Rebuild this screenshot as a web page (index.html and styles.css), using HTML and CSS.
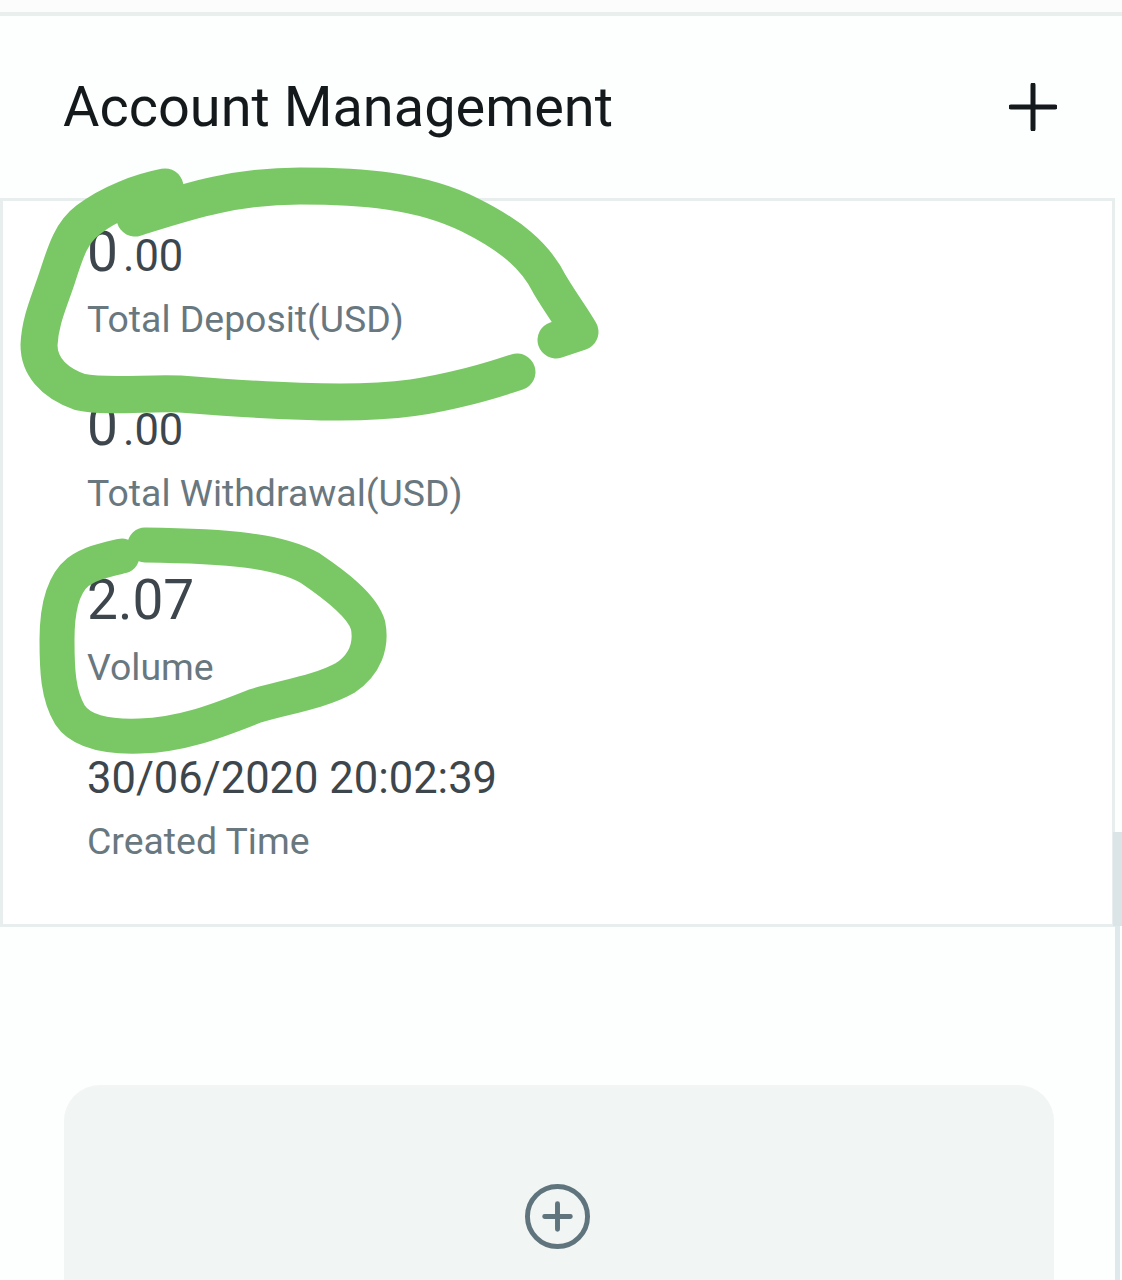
FILE: index.html
```html
<!DOCTYPE html>
<html lang="en">
<head>
    <meta charset="UTF-8">
    <meta name="viewport" content="width=device-width, initial-scale=1.0">
    <title>Account Management</title>
    <link rel="stylesheet" href="styles.css">
</head>
<body>

<div class="top-strip"></div>

<!-- Header -->
<header class="section-header">
    <h1>Account Management</h1>
    <svg class="add-icon" viewBox="0 0 48 48" aria-hidden="true">
        <path d="M24 2V46M2 24H46"/>
    </svg>
</header>

<!-- Account details -->
<div class="account-card">
    <div class="stat">
        <p class="stat-value"><span class="big zero">0</span>.00</p>
        <p class="stat-label">Total Deposit(USD)</p>
    </div>
    <div class="stat">
        <p class="stat-value"><span class="big zero">0</span>.00</p>
        <p class="stat-label">Total Withdrawal(USD)</p>
    </div>
    <div class="stat">
        <p class="stat-value"><span class="big">2.07</span></p>
        <p class="stat-label">Volume</p>
    </div>
    <div class="stat">
        <p class="stat-value">30/06/2020 20:02:39</p>
        <p class="stat-label">Created Time</p>
    </div>
</div>

<!-- Add account panel -->
<div class="add-panel">
    <svg class="add-circle" viewBox="0 0 66 66" aria-hidden="true">
        <circle cx="33" cy="33" r="30.5"/>
        <path d="M33 20V46M20 33H46"/>
    </svg>
</div>

<div class="scroll-track"></div>
<div class="scroll-thumb"></div>

<!-- Hand drawn marks over the screenshot -->
<svg class="marks" viewBox="0 0 1122 1280" aria-hidden="true">
    <path d="M165 187C140 192 110 203 88 220C72 232 66 250 58 275C50 300 40 320 39 345C39 365 52 382 80 392C110 398 150 392 180 394C230 398 290 402 340 402C400 402 430 396 470 386C490 381 505 376 517 372"/>
    <path d="M135 218C180 204 230 186 300 186C360 186 420 190 470 215C510 235 535 255 550 285C562 305 572 318 580 332L556 340"/>
    <path class="thin" d="M122 556C105 560 90 563 78 572C62 585 57 610 57 640C57 670 58 695 70 715C82 733 110 737 140 736C180 735 215 722 255 706C285 697 320 692 345 678C365 665 372 645 368 625C362 605 335 585 310 568C280 551 230 546 145 545"/>
</svg>

</body>
</html>
```

FILE: styles.css
```css
/* Global Styles */
* {
    margin: 0;
    padding: 0;
    box-sizing: border-box;
}

html {
    height: 1280px;
    overflow: hidden;
}

body {
    font-family: Roboto, sans-serif;
    background-color: #fdfefe;
    height: 1280px;
    position: relative;
    overflow: hidden;
}

.top-strip {
    height: 16px;
    background-color: #fbfcfb;
    border-bottom: 4px solid #e9efed;
}

/* Header */
.section-header {
    height: 182px;
    padding: 0 65px 0 63px;
    display: flex;
    justify-content: space-between;
    align-items: center;
}

.section-header h1 {
    font-size: 55.9px;
    font-weight: 400;
    color: #14191c;
}

.add-icon {
    width: 48px;
    height: 48px;
}

.add-icon path {
    fill: none;
    stroke: #14191c;
    stroke-width: 5;
    stroke-linecap: round;
}

/* Account card */
.account-card {
    width: 1115px;
    height: 729px;
    padding: 0 0 0 84px;
    background-color: #fff;
    border: 3px solid #e8eeed;
}

.stat {
    height: 174px;
}

.stat-value {
    padding-top: 26px;
    font-size: 43.5px;
    line-height: 60px;
    color: #3d464c;
}

.stat-value .big {
    font-size: 55px;
    line-height: 0;
}

.stat-value .zero {
    margin-right: 5px;
}

.stat-label {
    margin-top: 7px;
    font-size: 37.4px;
    line-height: 50px;
    color: #69777f;
}

/* Add panel */
.add-panel {
    width: 990px;
    height: 196px;
    margin: 158px 0 0 64px;
    padding: 99px 4px 0 0;
    display: flex;
    justify-content: center;
    background-color: #f1f5f4;
    border-radius: 36px 36px 0 0;
}

.add-circle {
    width: 65px;
    height: 65px;
}

.add-circle circle, .add-circle path {
    fill: none;
    stroke: #5f747c;
    stroke-width: 5;
    stroke-linecap: round;
}

/* Scrollbar on the right edge */
.scroll-track {
    position: absolute;
    top: 926px;
    right: 2px;
    width: 5px;
    height: 354px;
    background-color: #dfe8ea;
}

.scroll-thumb {
    position: absolute;
    top: 832px;
    right: 0;
    width: 9px;
    height: 94px;
    background-color: #dbe5e8;
}

/* Green marker */
.marks {
    position: absolute;
    top: 0;
    left: 0;
    width: 1122px;
    height: 1280px;
}

.marks path {
    fill: none;
    stroke: #79c865;
    stroke-width: 37;
    stroke-linecap: round;
    stroke-linejoin: round;
}

.marks .thin {
    stroke-width: 35;
}
```
